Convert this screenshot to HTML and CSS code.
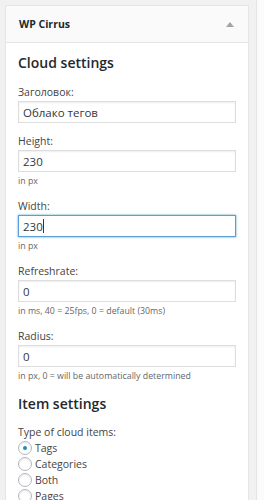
FILE: index.html
```html
<!DOCTYPE html>
<html lang="ru">
<head>
  <meta charset="UTF-8" />
  <meta name="viewport" content="width=device-width, initial-scale=1.0" />
  <title>WP Cirrus</title>
  <link rel="stylesheet" href="styles.css">
</head>
<body>
  <div class="widget">
    <div class="widget-top">
      <div class="widget-title">WP Cirrus</div>
      <span class="widget-arrow"></span>
    </div>
    <div class="widget-inside">
      <h3 class="section-title">Cloud settings</h3>

      <div class="field">
        <label class="field-label" for="title">Заголовок:</label>
        <input class="field-input" id="title" type="text" value="Облако тегов">
      </div>

      <div class="field">
        <label class="field-label" for="height">Height:</label>
        <input class="field-input" id="height" type="text" value="230">
        <div class="field-help">in px</div>
      </div>

      <div class="field">
        <label class="field-label" for="width">Width:</label>
        <div class="input-wrap">
          <input class="field-input focused" id="width" type="text" value="230">
          <span class="caret"></span>
        </div>
        <div class="field-help">in px</div>
      </div>

      <div class="field">
        <label class="field-label" for="refresh">Refreshrate:</label>
        <input class="field-input" id="refresh" type="text" value="0">
        <div class="field-help">in ms, 40 = 25fps, 0 = default (30ms)</div>
      </div>

      <div class="field">
        <label class="field-label" for="radius">Radius:</label>
        <input class="field-input" id="radius" type="text" value="0">
        <div class="field-help">in px, 0 = will be automatically determined</div>
      </div>

      <h3 class="section-title">Item settings</h3>

      <div class="field">
        <div class="field-label">Type of cloud items:</div>
        <label class="radio-row"><span class="radio checked"></span>Tags</label>
        <label class="radio-row"><span class="radio"></span>Categories</label>
        <label class="radio-row"><span class="radio"></span>Both</label>
        <label class="radio-row"><span class="radio"></span>Pages</label>
      </div>
    </div>
  </div>
  <div class="side-strip"></div>
</body>
</html>
```
FILE: styles.css
```css
* {
  margin: 0;
  padding: 0;
  box-sizing: border-box;
}
body {
  font-family: 'Open Sans', 'Noto Sans', sans-serif;
  background-color: #f1f1f1;
  color: #444;
  display: flex;
  align-items: flex-start;
  height: 500px;
  overflow: hidden;
}
.widget {
  width: 244px;
  margin: 5px 0 0 5px;
  background-color: #fff;
  border: 1px solid #e5e5e5;
  flex-shrink: 0;
}
/* Title bar */
.widget-top {
  display: flex;
  justify-content: space-between;
  align-items: center;
  height: 37px;
  padding: 0 14px 0 13px;
  background-color: #fafafa;
  border-bottom: 1px solid #e5e5e5;
}
.widget-title {
  font-size: 10.5px;
  font-weight: 700;
  color: #23282d;
}
.widget-arrow {
  width: 0;
  height: 0;
  border-left: 4px solid transparent;
  border-right: 4px solid transparent;
  border-bottom: 5px solid #a0a5aa;
  margin-top: 1px;
}
/* Form body */
.widget-inside {
  padding: 8px 12px 0;
}
.section-title {
  font-size: 14px;
  font-weight: 600;
  line-height: 24px;
  color: #23282d;
  margin-bottom: 7px;
}
.widget-inside > .section-title:first-child {
  margin-bottom: 8px;
}
.field {
  margin-bottom: 9px;
}
.field-label {
  display: block;
  font-size: 10.5px;
  line-height: 18px;
  color: #444;
}
.field-input {
  display: block;
  width: 100%;
  height: 22px;
  padding: 0 4px;
  font-family: 'Open Sans', 'Noto Sans', sans-serif;
  font-size: 11.5px;
  color: #32373c;
  background-color: #fff;
  border: 1px solid #ddd;
  box-shadow: inset 0 1px 2px rgba(0, 0, 0, 0.07);
  outline: none;
}
.field-input.focused {
  border-color: #5b9dd9;
  box-shadow: 0 0 2px rgba(30, 140, 190, 0.8);
}
.input-wrap {
  position: relative;
}
.caret {
  position: absolute;
  left: 25px;
  top: 4px;
  width: 1px;
  height: 14px;
  background-color: #32373c;
}
.field-help {
  font-size: 8.8px;
  line-height: 14px;
  margin-top: 2px;
  color: #666;
}
/* Radio list */
.radio-row {
  display: flex;
  align-items: center;
  height: 16px;
  line-height: 16px;
  font-size: 10.5px;
  color: #444;
}
.field-label + .radio-row {
  margin-top: -1px;
}
.radio {
  width: 14px;
  height: 14px;
  margin-right: 3px;
  border: 1px solid #b4b9be;
  border-radius: 50%;
  background-color: #fff;
  box-shadow: inset 0 1px 2px rgba(0, 0, 0, 0.1);
  display: flex;
  align-items: center;
  justify-content: center;
}
.radio.checked::before {
  content: '';
  width: 4px;
  height: 4px;
  border-radius: 50%;
  background-color: #1e8cbe;
}
.side-strip {
  width: 8px;
  height: 100%;
  margin-left: 7px;
  background-color: #fbfbfb;
  border-left: 1px solid #e5e5e5;
}
```
